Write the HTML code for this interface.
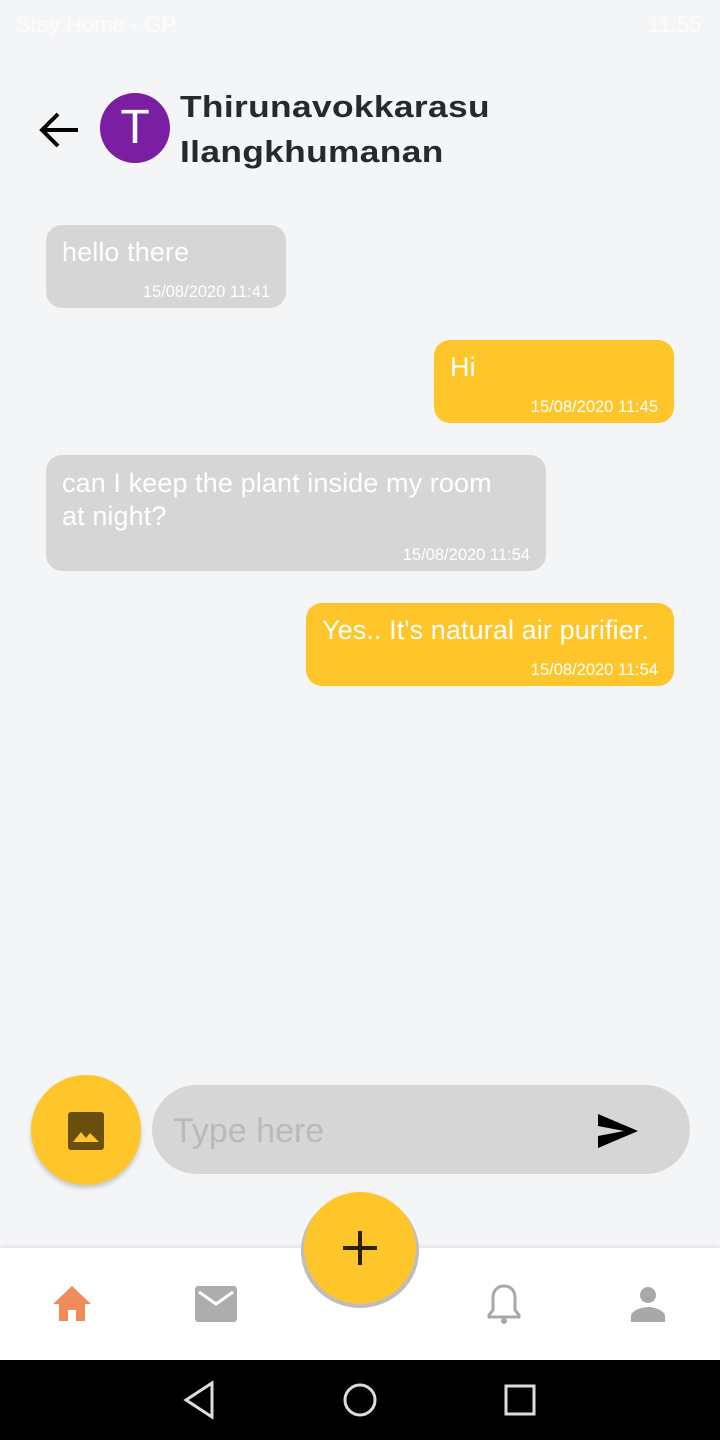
<!DOCTYPE html>
<html><head><style>
body{margin:0;width:720px;height:1440px;background:#f4f5f7;font-family:"Liberation Sans",sans-serif;position:relative;overflow:hidden}
.abs{position:absolute}
.sb{top:12px;left:16px;color:#fdfdfd;font-size:22px;opacity:.9}
.name{left:180px;top:84px;font-weight:bold;font-size:31px;line-height:45px;color:#262a2c;transform:scaleX(1.14);transform-origin:left top;letter-spacing:.3px}
.av{left:100px;top:93px;width:70px;height:70px;border-radius:50%;background:#7b1fa2;color:#fff;font-size:48px;text-align:center;line-height:70px}
.b{position:absolute;border-radius:16px;color:#fff;font-size:27px;letter-spacing:.1px;box-sizing:border-box;padding:12px 16px}
.g{background:#d6d6d6}.y{background:#ffc62c}
.t{position:absolute;right:16px;bottom:6px;font-size:16.5px;letter-spacing:0}
.nav{top:1248px;left:0;width:720px;height:112px;background:#fff;box-shadow:0 -2px 4px rgba(0,0,0,.08)}
.sys{top:1360px;left:0;width:720px;height:80px;background:#000}
</style></head><body>
<div class="abs sb">Stay Home - GP</div>
<div class="abs sb" style="left:648px">11:55</div>
<svg class="abs" style="left:38px;top:108px" width="44" height="44" viewBox="0 0 44 44"><path d="M40 22H6M20 6L4 22l16 16" stroke="#000" stroke-width="4" fill="none"/></svg>
<div class="abs av">T</div>
<div class="abs name">Thirunavokkarasu<br>Ilangkhumanan</div>

<div class="b g" style="left:46px;top:225px;width:240px;height:83px">hello there<span class="t">15/08/2020 11:41</span></div>
<div class="b y" style="left:434px;top:340px;width:240px;height:83px">Hi<span class="t">15/08/2020 11:45</span></div>
<div class="b g" style="left:46px;top:455px;width:500px;height:116px;line-height:33px;padding-top:12px">can I keep the plant inside my room<br>at night?<span class="t" style="line-height:normal">15/08/2020 11:54</span></div>
<div class="b y" style="left:306px;top:603px;width:368px;height:83px">Yes.. It's natural air purifier.<span class="t">15/08/2020 11:54</span></div>

<div class="abs" style="left:31px;top:1075px;width:110px;height:110px;border-radius:50%;background:#ffc62c;box-shadow:0 3px 5px rgba(0,0,0,.2)"></div>
<svg class="abs" style="left:68px;top:1112px" width="36" height="38" viewBox="0 0 36 38"><rect x="0" y="0" width="36" height="38" rx="3" fill="#6b4f10"/><path d="M5 30l8-10 5 6 4-5 9 9z" fill="#ffc62c"/></svg>
<div class="abs" style="left:152px;top:1085px;width:538px;height:89px;border-radius:45px;background:#d6d6d6"></div>
<div class="abs" style="left:173px;top:1112px;font-size:34px;color:#b9b9b9">Type here</div>
<svg class="abs" style="left:596px;top:1111px" width="44" height="40" viewBox="0 0 44 40"><path d="M2 3l40 17-40 17 0-12 26-5-26-5z" fill="#000"/></svg>

<div class="abs nav"></div>
<div class="abs" style="left:301px;top:1194px;width:118px;height:114px;border-radius:50%;background:#bdbdbd"></div>
<div class="abs" style="left:304px;top:1192px;width:112px;height:112px;border-radius:50%;background:#ffc62c"></div>
<svg class="abs" style="left:340px;top:1228px" width="40" height="40"><path d="M20 3v34M3 20h34" stroke="#2b2206" stroke-width="4"/></svg>
<svg class="abs" style="left:52px;top:1284px" width="40" height="38" viewBox="0 0 40 38"><path d="M20 2L1 20h6v17h9V26h8v11h9V20h6z" fill="#f08c5c"/></svg>
<svg class="abs" style="left:195px;top:1286px" width="42" height="36" viewBox="0 0 42 36"><rect width="42" height="36" rx="3" fill="#adadad"/><path d="M4 6l17 12 17-12" stroke="#fff" stroke-width="3" fill="none"/></svg>
<svg class="abs" style="left:486px;top:1283px" width="36" height="42" viewBox="0 0 36 42"><path d="M18 3c-7 0-11 5-11 12v12l-4 5v2h30v-2l-4-5V15C29 8 25 3 18 3z" stroke="#a8a8a8" stroke-width="3" fill="none"/><circle cx="18" cy="38" r="3" fill="#a8a8a8"/></svg>
<svg class="abs" style="left:630px;top:1286px" width="36" height="36" viewBox="0 0 36 36"><circle cx="18" cy="9" r="8" fill="#a8a8a8"/><path d="M1 36v-6c0-5 10-9 17-9s17 4 17 9v6z" fill="#a8a8a8"/></svg>

<div class="abs sys"></div>
<svg class="abs" style="left:180px;top:1380px" width="380" height="40"><path d="M32 3L6 20l26 17z" stroke="#ddd" stroke-width="3" fill="none"/><circle cx="180" cy="20" r="15" stroke="#ddd" stroke-width="3" fill="none"/><rect x="326" y="6" width="28" height="28" stroke="#ddd" stroke-width="3" fill="none"/></svg>
</body></html>
